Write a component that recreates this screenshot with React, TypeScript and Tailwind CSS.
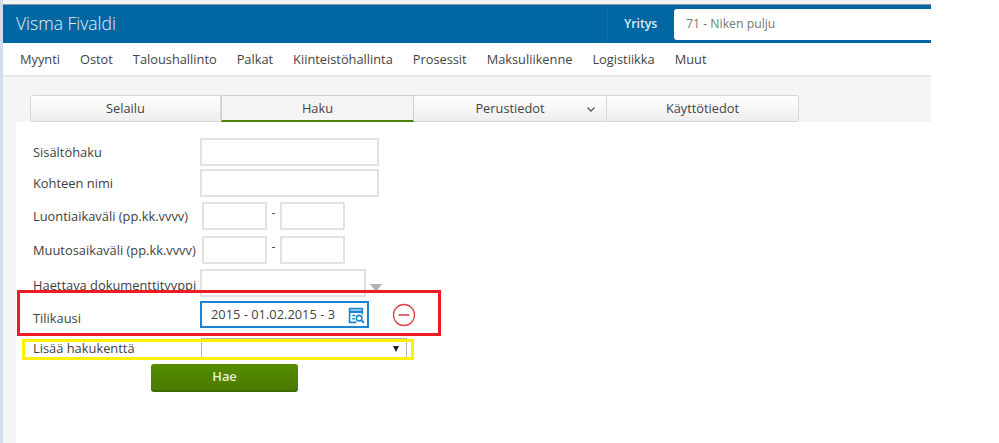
import React from 'react';

const font = "font-['Open_Sans',sans-serif]";
const navItems = ['Myynti', 'Ostot', 'Taloushallinto', 'Palkat', 'Kiinteistöhallinta', 'Prosessit', 'Maksuliikenne', 'Logistiikka', 'Muut'];

const Field = ({ className }: { className: string }) => (
    <div className={`border-2 border-[#e2e2e2] bg-white ${className}`} />
);

const Label = ({ children, className = '' }: { children: React.ReactNode; className?: string }) => (
    <span className={`w-[167px] shrink-0 whitespace-nowrap text-[12.875px] leading-[18px] text-[#3f3f3f] ${className}`}>{children}</span>
);

const DateRow = ({ label, className }: { label: string; className: string }) => (
    <div className={`flex h-[28px] items-center ${className}`}>
        <Label>{label}</Label>
        <Field className="ml-[2px] h-[28px] w-[65px]" />
        <span className="mb-[7px] w-[13px] text-center text-[12px] leading-none text-[#444]">-</span>
        <Field className="h-[28px] w-[65px]" />
    </div>
);

export default function App() {
    return (
        <div className={`relative flex h-[443px] w-[999px] overflow-hidden bg-white ${font}`}>
            <div className="w-[3px] shrink-0 bg-[#d3dbee]" />
            <div className="flex w-[928px] shrink-0 flex-col bg-[#f5f5f5] pt-[4px]">
                <header className="flex h-[39px] shrink-0 items-center border-t border-[#8e9aa5] bg-[#0067a3]">
                    <span className="ml-[13px] text-[17.5px] font-light leading-none text-[#e6f0f7]">Visma Fivaldi</span>
                    <div className="ml-auto flex h-full w-[324px] items-center border-l border-[#0d70ab] pl-[16px]">
                        <span className="w-[50px] text-[12.25px] font-semibold text-[#dbe9f3]">Yritys</span>
                        <div className="flex h-[31px] flex-1 items-center rounded-l-[3px] bg-white pl-[12px] text-[12.25px] text-[#777]">71 - Niken pulju</div>
                    </div>
                </header>
                <nav className="flex h-[34px] shrink-0 items-center gap-[20px] border-b-2 border-[#e6e6e6] bg-white pl-[17px] pt-[2px] text-[12.8px] text-[#444]">
                    {navItems.map((item) => (
                        <span key={item}>{item}</span>
                    ))}
                </nav>
                <div className="flex h-[45px] shrink-0 items-end pl-[27px]">
                    <div className="flex h-[27px] w-[769px] text-[12.8px] leading-none text-[#444]">
                        <div className="flex w-[191px] items-center justify-center rounded-l-[3px] border border-[#d8d8d8] bg-gradient-to-b from-white to-[#eeeeee]">Selailu</div>
                        <div className="flex w-[193px] items-center justify-center border-x border-t border-[#d0d0d0] border-b-2 border-b-[#4f8400] bg-[#f4f4f4]">Haku</div>
                        <div className="relative flex w-[193px] items-center justify-center border-y border-r border-[#d8d8d8] bg-gradient-to-b from-white to-[#eeeeee]">
                            Perustiedot
                            <svg className="absolute right-[10px] top-[10px]" width="10" height="7" viewBox="0 0 10 7" fill="none" stroke="#555" strokeWidth="1.3">
                                <path d="M1.5 1.5 5 5l3.5-3.5" />
                            </svg>
                        </div>
                        <div className="flex w-[192px] items-center justify-center rounded-r-[3px] border-y border-r border-[#d8d8d8] bg-gradient-to-b from-white to-[#eeeeee]">Käyttötiedot</div>
                    </div>
                </div>
                <main className="ml-[13px] flex-1 bg-white pl-[17px] pt-[16px]">
                    <div className="flex h-[28px] items-center">
                        <Label>Sisältöhaku</Label>
                        <Field className="h-[28px] w-[179px]" />
                    </div>
                    <div className="mt-[3px] flex h-[28px] items-center">
                        <Label>Kohteen nimi</Label>
                        <Field className="h-[28px] w-[179px]" />
                    </div>
                    <DateRow label="Luontiaikaväli (pp.kk.vvvv)" className="mt-[5px]" />
                    <DateRow label="Muutosaikaväli (pp.kk.vvvv)" className="mt-[6px]" />
                    <div className="mt-[5px] flex h-[28px] items-center">
                        <Label className="mt-[3px]">Haettava dokumenttityyppi</Label>
                        <Field className="h-[28px] w-[166px]" />
                        <span className="ml-[4px] mt-[9px] h-0 w-0 border-x-[6px] border-t-[8px] border-x-transparent border-t-[#b4b4b4]" />
                    </div>
                    <div className="mt-[4px] flex h-[27px] items-center">
                        <Label className="mt-[6px]">Tilikausi</Label>
                        <div className="flex h-[27px] w-[169px] items-center border-2 border-[#1b84d0] bg-white pl-[9px] pt-[1px] text-[12.875px] text-[#444]">
                            <span className="w-[124px] overflow-hidden whitespace-nowrap">2015 - 01.02.2015 - 31.01.2016</span>
                            <svg className="ml-[13px]" width="17" height="17" viewBox="0 0 16 16" fill="none" stroke="#1b84d0" strokeWidth="1.5">
                                <path d="M8 14.5H1.5v-13h12V7" />
                                <path d="M1.5 4.5h12" strokeWidth="2.4" />
                                <path d="M4 8h3M4 11h2.5" />
                                <circle cx="10.5" cy="10.5" r="2.6" />
                                <path d="m12.5 12.5 2.5 2.5" strokeWidth="1.8" />
                            </svg>
                        </div>
                        <svg className="ml-[23px]" width="24" height="24" viewBox="0 0 24 24" fill="none" stroke="#d9464c" strokeWidth="1.3">
                            <circle cx="12" cy="12" r="10.5" />
                            <path d="M6.5 12h11" strokeWidth="1.6" />
                        </svg>
                    </div>
                    <div className="mt-[10px] flex h-[19px] items-center">
                        <Label>Lisää hakukenttä</Label>
                        <div className="ml-[1px] flex h-[19px] w-[206px] items-center justify-end border-x border-t-2 border-[#b5b5b5] bg-white pr-[7px]">
                            <span className="mt-[1px] h-0 w-0 border-x-[3px] border-t-[6px] border-x-transparent border-t-[#222]" />
                        </div>
                    </div>
                    <button className="ml-[118px] mt-[7px] flex h-[28px] w-[147px] items-center justify-center rounded-[3px] border-b-2 border-[#3f6a00] bg-gradient-to-b from-[#558c00] to-[#4a7c00] text-[12.875px] font-semibold text-[#e8f0dc]">Hae</button>
                </main>
            </div>
            <div className="pointer-events-none absolute left-[17px] top-[290px] h-[46px] w-[424px] border-[3px] border-[#ed1c24]" />
            <div className="pointer-events-none absolute left-[22px] top-[339px] h-[21px] w-[392px] border-[3px] border-[#fff200]" />
        </div>
    );
}
